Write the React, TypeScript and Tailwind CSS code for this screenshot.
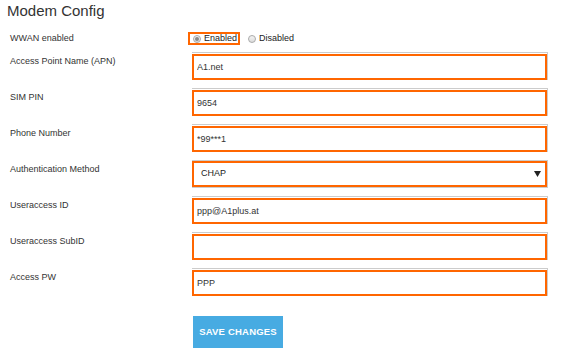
import React from 'react';

const font = { fontFamily: '"Liberation Sans", Arial, sans-serif' };

type FieldProps = {
  label: string;
  value?: string;
};

const Field = ({ label, value = '' }: FieldProps) => (
  <div className="flex items-start h-[36px]">
    <div className="w-[182px] pt-[4px] text-[9px] leading-[11px] text-[#333]">{label}</div>
    <div className="w-[356px] h-[28px] border-t border-r border-b border-[#ccc]">
      <input
        readOnly
        value={value}
        className="w-full h-full border-2 border-[#ff6600] bg-white pl-[3px] text-[9px] text-[#333] outline-none"
        style={font}
      />
    </div>
  </div>
);

const Radio = ({ checked }: { checked?: boolean }) => (
  <span className="flex items-center justify-center w-[8px] h-[8px] rounded-full border border-[#aaa] bg-gradient-to-b from-[#f4f4f4] to-[#dcdcdc]">
    {checked && <span className="w-[4px] h-[4px] rounded-full bg-[#8a8a8a]"></span>}
  </span>
);

export default function App() {
  return (
    <div className="w-[586px] h-[355px] bg-white px-[10px] pt-[1px]" style={font}>
      <div className="-ml-[3px] h-[20px] text-[15px] leading-[20px] text-[#333]">Modem Config</div>

      <div className="mt-[11px] flex items-center h-[13px]">
        <div className="w-[178px] text-[9px] leading-[11px] text-[#333]">WWAN enabled</div>
        <div className="flex items-center">
          <label className="flex items-center h-[13px] w-[52px] border-2 border-[#ff6600] pl-[3px] gap-[3px] text-[9px] text-[#222]">
            <Radio checked />
            <span>Enabled</span>
          </label>
          <label className="flex items-center ml-[8px] gap-[3px] text-[9px] text-[#222]">
            <Radio />
            <span>Disabled</span>
          </label>
        </div>
      </div>

      <div className="mt-[7px]">
        <Field label="Access Point Name (APN)" value="A1.net" />
        <Field label="SIM PIN" value="9654" />
        <Field label="Phone Number" value="*99***1" />

        <div className="flex items-start h-[36px]">
          <div className="w-[182px] pt-[4px] text-[9px] leading-[11px] text-[#333]">Authentication Method</div>
          <div className="w-[356px] h-[28px] border-t border-r border-b border-[#ccc]">
            <div className="w-full h-full border-2 border-[#ff6600] bg-white pl-[7px] pr-[4px] flex items-center justify-between text-[9px] text-[#222]">
              <span>CHAP</span>
              <svg width="7" height="6" viewBox="0 0 7 6">
                <path d="M0 0 L7 0 L3.5 6 Z" fill="#222" />
              </svg>
            </div>
          </div>
        </div>

        <Field label="Useraccess ID" value="ppp@A1plus.at" />
        <Field label="Useraccess SubID" />
        <Field label="Access PW" value="PPP" />
      </div>

      <div className="mt-[12px] pl-[183px]">
        <button className="w-[90px] h-[32px] bg-[#47abe2] text-white font-bold text-[9.5px] tracking-[0.2px]">
          SAVE CHANGES
        </button>
      </div>
    </div>
  );
}
